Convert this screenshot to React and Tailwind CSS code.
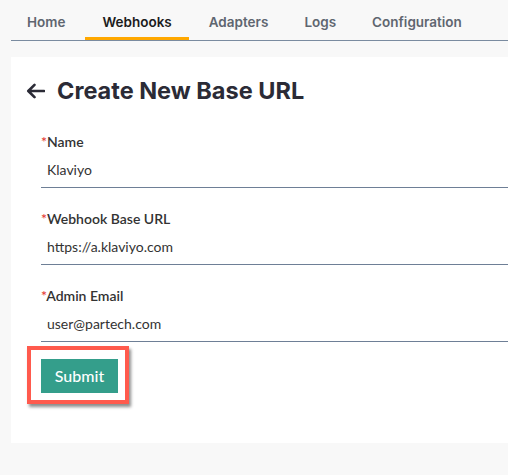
import React from "react";

const tabs = ["Home", "Webhooks", "Adapters", "Logs", "Configuration"];

const fields = [
  { label: "Name", value: "Klaviyo" },
  { label: "Webhook Base URL", value: "https://a.klaviyo.com" },
  { label: "Admin Email", value: "user@partech.com" },
];

function BackArrow() {
  return (
    <svg width="19" height="16" viewBox="0 0 19 16" fill="none">
      <path
        d="M18 8H2.5M8.5 1.8L2.3 8l6.2 6.2"
        stroke="#2b2b36"
        strokeWidth="2.6"
        strokeLinecap="round"
        strokeLinejoin="round"
      />
    </svg>
  );
}

export default function App() {
  return (
    <div className="min-h-[475px] bg-[#f8f8f8] overflow-hidden font-['Lato',sans-serif]">
      {/* tabs */}
      <nav className="ml-[11px] pt-[7px] flex gap-1 border-b border-[#7a8ba0] font-['Inter',sans-serif]">
        {tabs.map((t) => (
          <div
            key={t}
            className={
              t === "Webhooks"
                ? "h-[33px] px-[17px] flex items-center text-[13.5px] font-semibold text-[#1c1c1c] border-b-[3px] border-[#ffa800]"
                : "h-[33px] px-[16px] flex items-center text-[13.5px] font-semibold text-[#5f6670] border-b-[3px] border-transparent"
            }
          >
            {t}
          </div>
        ))}
      </nav>

      {/* card */}
      <div className="mt-4 ml-[11px] bg-white pb-[50px]">
        <div className="flex items-center gap-3 pl-[15px] pt-[16px] h-[51px]">
          <BackArrow />
          <h1 className="text-[23.5px] font-bold text-[#2b2b36] font-['Inter',sans-serif]">
            Create New Base URL
          </h1>
        </div>

        <div className="pl-[30px] pt-[24px]">
          {fields.map((f) => (
            <div key={f.label} className="mb-[21px]">
              <div className="leading-5 text-[14px] font-semibold text-[#333]">
                <span className="text-[#e53935]">*</span>
                {f.label}
              </div>
              <div className="h-[36px] flex items-center px-[6px] border-b border-[#6e7f96] text-[14px] text-[#333]">
                {f.value}
              </div>
            </div>
          ))}

          <div className="relative inline-block -mt-1">
            <button className="w-[77px] h-[34px] bg-[#349e8b] text-white text-[16px] font-medium">
              Submit
            </button>
            <div className="absolute -left-[14px] -top-[13px] -right-[11px] -bottom-[11px] border-4 border-[#ff5a4d] shadow-[2px_3px_3px_rgba(0,0,0,0.45)]" />
          </div>
        </div>
      </div>
    </div>
  );
}
